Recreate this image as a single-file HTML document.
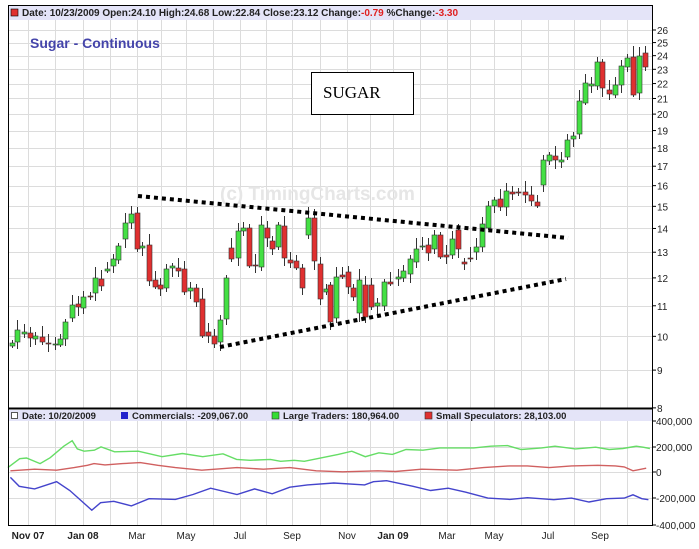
<!DOCTYPE html>
<html><head><meta charset="utf-8"><style>
body{margin:0;background:#fff;width:699px;height:549px;overflow:hidden;font-family:"Liberation Sans",sans-serif}
svg{position:absolute;left:0;top:0}
</style></head><body>
<svg id="s" width="699" height="549" xmlns="http://www.w3.org/2000/svg" font-family="Liberation Sans, sans-serif">
<rect x="8" y="5" width="645" height="15" fill="#e4e4f8"/>
<rect x="8" y="410" width="645" height="11" fill="#e4e4f8"/>
<g id="grid" stroke="#dcdcdc" stroke-width="1"></g>
<text x="220" y="200" font-size="19" font-weight="bold" fill="#e6e6e6">(c) TimingCharts.com</text>
<g id="lines" fill="none" stroke-width="1.4"></g>
<g id="candles"></g>
<g id="tl"></g>
<rect x="311.5" y="72.5" width="102" height="42" fill="#fff" stroke="#000"/>
<text x="323" y="98" font-family="Liberation Serif, serif" font-size="17" fill="#000">SUGAR</text>
<text x="30" y="48" font-size="14" font-weight="bold" fill="#4444aa">Sugar - Continuous</text>
<rect x="11" y="9" width="7" height="7" fill="#e03030" stroke="#000" stroke-width="0.6"/>
<text x="22" y="16" font-size="10" font-weight="bold" fill="#222" textLength="436">Date: 10/23/2009  Open:24.10  High:24.68  Low:22.84  Close:23.12  Change:<tspan fill="#e02020">-0.79</tspan>  %Change:<tspan fill="#e02020">-3.30</tspan></text>
<g font-size="9.5" font-weight="bold" fill="#222">
<rect x="11.5" y="412.5" width="6" height="6" fill="#fff" stroke="#555"/>
<text x="22" y="419">Date: 10/20/2009</text>
<rect x="121" y="412" width="7" height="7" fill="#2222cc"/>
<text x="132" y="419">Commercials: -209,067.00</text>
<rect x="272" y="412" width="7" height="7" fill="#33dd33" stroke="#333" stroke-width="0.6"/>
<text x="283" y="419">Large Traders: 180,964.00</text>
<rect x="425" y="412" width="7" height="7" fill="#e03030" stroke="#333" stroke-width="0.6"/>
<text x="436" y="419">Small Speculators: 28,103.00</text>
</g>
<g stroke="#000" fill="none">
<line x1="8.5" y1="5" x2="8.5" y2="526"/>
<line x1="652.5" y1="5" x2="652.5" y2="526"/>
<line x1="8" y1="5.5" x2="653" y2="5.5"/>
<line x1="8" y1="408.5" x2="653" y2="408.5" stroke-width="2"/>
<line x1="8" y1="525.5" x2="653" y2="525.5"/>
</g>
<g id="ax" font-size="10" fill="#222"></g>
<g font-size="10" fill="#222" text-anchor="middle">
<text x="28" y="539" font-weight="bold">Nov 07</text>
<text x="83" y="539" font-weight="bold">Jan 08</text>
<text x="137" y="539">Mar</text>
<text x="186" y="539">May</text>
<text x="240" y="539">Jul</text>
<text x="292" y="539">Sep</text>
<text x="347" y="539">Nov</text>
<text x="393" y="539" font-weight="bold">Jan 09</text>
<text x="447" y="539">Mar</text>
<text x="494" y="539">May</text>
<text x="548" y="539">Jul</text>
<text x="600" y="539">Sep</text>
</g>
</svg>
<script>
var NS="http://www.w3.org/2000/svg";
function el(p,t,a){var e=document.createElementNS(NS,t);for(var k in a)e.setAttribute(k,a[k]);document.getElementById(p).appendChild(e);return e;}
function Y(p){return 30+320.6*(Math.log(26)-Math.log(p));}
var months=[28,55,83,110,137,161,186,213,240,266,292,320,347,370,393,420,447,470,494,521,548,574,600,627];
months.forEach(function(x){el("grid","line",{x1:x+.5,y1:20,x2:x+.5,y2:408});el("grid","line",{x1:x+.5,y1:421,x2:x+.5,y2:525});});
for(var p=9;p<=26;p++){var y=Math.round(Y(p))+.5;el("grid","line",{x1:8,y1:y,x2:653,y2:y});}
[447,472,498].forEach(function(y){el("grid","line",{x1:8,y1:y+.5,x2:653,y2:y+.5});});
for(var p=8;p<=26;p++){var y=Y(p);var t=el("ax","text",{x:657,y:y+4});t.textContent=p;el("ax","line",{x1:652,y1:y,x2:656,y2:y,stroke:"#000"});}
[["400,000",421],["200,000",447],["0",472],["-200,000",498],["-400,000",525]].forEach(function(a){var t=el("ax","text",{x:656,y:a[1]+4});t.textContent=a[0];el("ax","line",{x1:652,y1:a[1],x2:656,y2:a[1],stroke:"#000"});});
var C=[[12,343,346,"g"],[17,330,342,"g"],[24,332,334,"g"],[30,333,338,"r"],[35,336,339,"g"],[42,337,342,"r"],[48,343,344,"r"],[55,344,345,"g"],[60,339,345,"g"],[65,322,339,"g"],[72,305,318,"g"],[78,304,307,"r"],[83,297,308,"g"],[90,296,297,"r"],[95,278,293,"g"],[101,279,286,"r"],[107,269,271,"g"],[113,259,266,"g"],[118,246,260,"g"],[125,223,239,"g"],[131,214,223,"g"],[137,213,249,"r"],[142,246,248,"g"],[149,245,281,"r"],[155,280,287,"r"],[160,285,289,"r"],[166,269,288,"g"],[172,266,268,"g"],[178,268,271,"r"],[184,269,292,"r"],[190,288,291,"g"],[196,288,302,"r"],[202,299,336,"r"],[208,332,336,"r"],[214,336,344,"r"],[220,320,342,"g"],[226,278,319,"g"],[231,248,259,"r"],[238,231,258,"g"],[243,228,231,"g"],[249,228,266,"r"],[255,265,266,"r"],[261,225,267,"g"],[267,228,238,"r"],[272,241,249,"r"],[278,225,247,"g"],[284,226,258,"r"],[290,260,263,"r"],[296,261,268,"r"],[302,268,288,"r"],[308,218,235,"g"],[314,218,261,"r"],[320,264,299,"r"],[326,289,292,"g"],[330,285,322,"r"],[336,277,318,"g"],[342,275,277,"r"],[348,272,287,"r"],[353,288,297,"r"],[359,280,313,"g"],[365,285,317,"r"],[371,285,307,"r"],[377,303,306,"g"],[384,282,306,"g"],[390,282,284,"r"],[398,277,279,"g"],[403,271,278,"g"],[410,259,274,"g"],[416,249,262,"g"],[422,246,247,"g"],[428,245,253,"r"],[434,235,249,"g"],[440,235,257,"r"],[446,255,257,"r"],[452,239,255,"g"],[458,230,249,"r"],[464,262,264,"r"],[470,258,259,"r"],[476,247,252,"g"],[482,224,247,"g"],[488,206,228,"g"],[494,200,206,"g"],[500,199,207,"r"],[506,191,207,"g"],[512,192,194,"r"],[518,192,193,"r"],[525,192,195,"r"],[531,195,201,"r"],[537,202,206,"r"],[543,160,185,"g"],[549,155,161,"g"],[555,156,160,"r"],[561,160,162,"g"],[567,140,157,"g"],[573,136,139,"g"],[579,101,134,"g"],[585,83,103,"g"],[591,84,86,"g"],[597,62,86,"g"],[602,62,88,"r"],[609,90,94,"r"],[615,85,95,"g"],[621,66,85,"g"],[627,58,67,"g"],[633,57,95,"r"],[639,56,93,"g"],[645,53,67,"r"]];
C.forEach(function(c,i){var up=3+((i*7)%9),dn=2+((i*5)%8);
el("candles","line",{x1:c[0]+.5,y1:c[1]-up,x2:c[0]+.5,y2:c[2]+dn,stroke:"#333","stroke-width":1});
el("candles","rect",{x:c[0]-2,y:c[1],width:5,height:Math.max(1,c[2]-c[1]),fill:c[3]=="g"?"#44e044":"#e03030",stroke:"#333","stroke-width":0.6});});
el("tl","line",{x1:138,y1:196,x2:568,y2:238,stroke:"#000","stroke-width":4,"stroke-dasharray":"4 4"});
el("tl","line",{x1:220,y1:347,x2:566,y2:279,stroke:"#000","stroke-width":4,"stroke-dasharray":"4 4"});
function L(pts,col){var s=pts.map(function(p){return (28+(p[0]-65)*0.44).toFixed(1)+","+(420+(p[1]-60)*0.328).toFixed(1);}).join(" ");el("lines","polyline",{points:s,stroke:col});}
L([[25,205],[60,178],[80,176],[120,193],[150,175],[190,140],[215,123],[230,148],[250,155],[280,152],[300,142],[340,157],[410,155],[480,172],[540,162],[600,172],[660,163],[700,180],[740,183],[800,180],[830,186],[870,183],[900,186],[1000,165],[1040,155],[1080,172],[1120,160],[1160,165],[1200,150],[1250,152],[1300,145],[1400,145],[1450,140],[1500,138],[1540,150],[1600,145],[1640,140],[1700,148],[1760,143],[1800,150],[1840,147],[1880,140],[1900,143],[1920,147]].map(function(p){return [p[0]*0.77,p[1]];}),"#66dd66");
L([[25,215],[80,210],[130,213],[170,205],[200,198],[215,193],[240,197],[280,193],[320,190],[360,198],[400,205],[460,213],[540,205],[600,210],[660,205],[720,215],[780,218],[860,215],[900,217],[960,210],[1040,213],[1100,205],[1160,200],[1200,200],[1250,205],[1300,200],[1360,198],[1400,200],[1420,203],[1440,215],[1470,207]],"#d06060");
L([[25,235],[45,262],[80,270],[130,248],[160,275],[210,335],[230,312],[260,308],[300,322],[340,300],[400,302],[440,287],[480,268],[540,287],[580,270],[620,285],[660,265],[700,258],[760,252],[830,258],[850,248],[880,245],[940,262],[980,275],[1020,268],[1060,280],[1110,298],[1160,302],[1200,297],[1260,303],[1300,298],[1340,310],[1380,300],[1420,298],[1440,288],[1460,300],[1475,303]],"#4444cc");
</script>
</body></html>
